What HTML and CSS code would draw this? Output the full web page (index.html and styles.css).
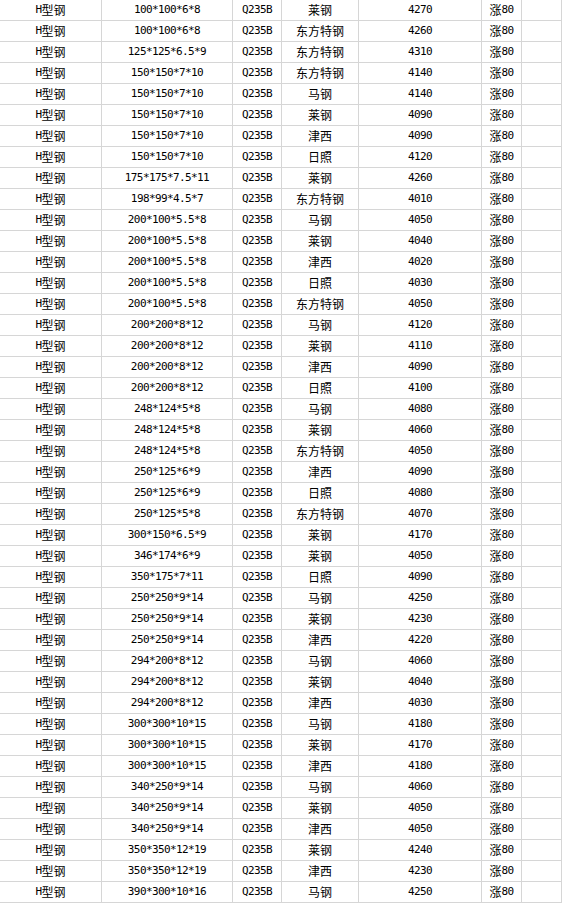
FILE: index.html
```html
<!DOCTYPE html>
<html lang="zh">
<head>
<meta charset="utf-8">
<title>H型钢价格</title>
<link rel="stylesheet" href="styles.css">
</head>
<body>
<div class="sheet">
<div class="c"><span class="a">H</span>型钢</div><div class="c n">100*100*6*8</div><div class="c n">Q235B</div><div class="c">莱钢</div><div class="c n">4270</div><div class="c">涨<span class="a">80</span></div><div class="c"></div>
<div class="c"><span class="a">H</span>型钢</div><div class="c n">100*100*6*8</div><div class="c n">Q235B</div><div class="c">东方特钢</div><div class="c n">4260</div><div class="c">涨<span class="a">80</span></div><div class="c"></div>
<div class="c"><span class="a">H</span>型钢</div><div class="c n">125*125*6.5*9</div><div class="c n">Q235B</div><div class="c">东方特钢</div><div class="c n">4310</div><div class="c">涨<span class="a">80</span></div><div class="c"></div>
<div class="c"><span class="a">H</span>型钢</div><div class="c n">150*150*7*10</div><div class="c n">Q235B</div><div class="c">东方特钢</div><div class="c n">4140</div><div class="c">涨<span class="a">80</span></div><div class="c"></div>
<div class="c"><span class="a">H</span>型钢</div><div class="c n">150*150*7*10</div><div class="c n">Q235B</div><div class="c">马钢</div><div class="c n">4140</div><div class="c">涨<span class="a">80</span></div><div class="c"></div>
<div class="c"><span class="a">H</span>型钢</div><div class="c n">150*150*7*10</div><div class="c n">Q235B</div><div class="c">莱钢</div><div class="c n">4090</div><div class="c">涨<span class="a">80</span></div><div class="c"></div>
<div class="c"><span class="a">H</span>型钢</div><div class="c n">150*150*7*10</div><div class="c n">Q235B</div><div class="c">津西</div><div class="c n">4090</div><div class="c">涨<span class="a">80</span></div><div class="c"></div>
<div class="c"><span class="a">H</span>型钢</div><div class="c n">150*150*7*10</div><div class="c n">Q235B</div><div class="c">日照</div><div class="c n">4120</div><div class="c">涨<span class="a">80</span></div><div class="c"></div>
<div class="c"><span class="a">H</span>型钢</div><div class="c n">175*175*7.5*11</div><div class="c n">Q235B</div><div class="c">莱钢</div><div class="c n">4260</div><div class="c">涨<span class="a">80</span></div><div class="c"></div>
<div class="c"><span class="a">H</span>型钢</div><div class="c n">198*99*4.5*7</div><div class="c n">Q235B</div><div class="c">东方特钢</div><div class="c n">4010</div><div class="c">涨<span class="a">80</span></div><div class="c"></div>
<div class="c"><span class="a">H</span>型钢</div><div class="c n">200*100*5.5*8</div><div class="c n">Q235B</div><div class="c">马钢</div><div class="c n">4050</div><div class="c">涨<span class="a">80</span></div><div class="c"></div>
<div class="c"><span class="a">H</span>型钢</div><div class="c n">200*100*5.5*8</div><div class="c n">Q235B</div><div class="c">莱钢</div><div class="c n">4040</div><div class="c">涨<span class="a">80</span></div><div class="c"></div>
<div class="c"><span class="a">H</span>型钢</div><div class="c n">200*100*5.5*8</div><div class="c n">Q235B</div><div class="c">津西</div><div class="c n">4020</div><div class="c">涨<span class="a">80</span></div><div class="c"></div>
<div class="c"><span class="a">H</span>型钢</div><div class="c n">200*100*5.5*8</div><div class="c n">Q235B</div><div class="c">日照</div><div class="c n">4030</div><div class="c">涨<span class="a">80</span></div><div class="c"></div>
<div class="c"><span class="a">H</span>型钢</div><div class="c n">200*100*5.5*8</div><div class="c n">Q235B</div><div class="c">东方特钢</div><div class="c n">4050</div><div class="c">涨<span class="a">80</span></div><div class="c"></div>
<div class="c"><span class="a">H</span>型钢</div><div class="c n">200*200*8*12</div><div class="c n">Q235B</div><div class="c">马钢</div><div class="c n">4120</div><div class="c">涨<span class="a">80</span></div><div class="c"></div>
<div class="c"><span class="a">H</span>型钢</div><div class="c n">200*200*8*12</div><div class="c n">Q235B</div><div class="c">莱钢</div><div class="c n">4110</div><div class="c">涨<span class="a">80</span></div><div class="c"></div>
<div class="c"><span class="a">H</span>型钢</div><div class="c n">200*200*8*12</div><div class="c n">Q235B</div><div class="c">津西</div><div class="c n">4090</div><div class="c">涨<span class="a">80</span></div><div class="c"></div>
<div class="c"><span class="a">H</span>型钢</div><div class="c n">200*200*8*12</div><div class="c n">Q235B</div><div class="c">日照</div><div class="c n">4100</div><div class="c">涨<span class="a">80</span></div><div class="c"></div>
<div class="c"><span class="a">H</span>型钢</div><div class="c n">248*124*5*8</div><div class="c n">Q235B</div><div class="c">马钢</div><div class="c n">4080</div><div class="c">涨<span class="a">80</span></div><div class="c"></div>
<div class="c"><span class="a">H</span>型钢</div><div class="c n">248*124*5*8</div><div class="c n">Q235B</div><div class="c">莱钢</div><div class="c n">4060</div><div class="c">涨<span class="a">80</span></div><div class="c"></div>
<div class="c"><span class="a">H</span>型钢</div><div class="c n">248*124*5*8</div><div class="c n">Q235B</div><div class="c">东方特钢</div><div class="c n">4050</div><div class="c">涨<span class="a">80</span></div><div class="c"></div>
<div class="c"><span class="a">H</span>型钢</div><div class="c n">250*125*6*9</div><div class="c n">Q235B</div><div class="c">津西</div><div class="c n">4090</div><div class="c">涨<span class="a">80</span></div><div class="c"></div>
<div class="c"><span class="a">H</span>型钢</div><div class="c n">250*125*6*9</div><div class="c n">Q235B</div><div class="c">日照</div><div class="c n">4080</div><div class="c">涨<span class="a">80</span></div><div class="c"></div>
<div class="c"><span class="a">H</span>型钢</div><div class="c n">250*125*5*8</div><div class="c n">Q235B</div><div class="c">东方特钢</div><div class="c n">4070</div><div class="c">涨<span class="a">80</span></div><div class="c"></div>
<div class="c"><span class="a">H</span>型钢</div><div class="c n">300*150*6.5*9</div><div class="c n">Q235B</div><div class="c">莱钢</div><div class="c n">4170</div><div class="c">涨<span class="a">80</span></div><div class="c"></div>
<div class="c"><span class="a">H</span>型钢</div><div class="c n">346*174*6*9</div><div class="c n">Q235B</div><div class="c">莱钢</div><div class="c n">4050</div><div class="c">涨<span class="a">80</span></div><div class="c"></div>
<div class="c"><span class="a">H</span>型钢</div><div class="c n">350*175*7*11</div><div class="c n">Q235B</div><div class="c">日照</div><div class="c n">4090</div><div class="c">涨<span class="a">80</span></div><div class="c"></div>
<div class="c"><span class="a">H</span>型钢</div><div class="c n">250*250*9*14</div><div class="c n">Q235B</div><div class="c">马钢</div><div class="c n">4250</div><div class="c">涨<span class="a">80</span></div><div class="c"></div>
<div class="c"><span class="a">H</span>型钢</div><div class="c n">250*250*9*14</div><div class="c n">Q235B</div><div class="c">莱钢</div><div class="c n">4230</div><div class="c">涨<span class="a">80</span></div><div class="c"></div>
<div class="c"><span class="a">H</span>型钢</div><div class="c n">250*250*9*14</div><div class="c n">Q235B</div><div class="c">津西</div><div class="c n">4220</div><div class="c">涨<span class="a">80</span></div><div class="c"></div>
<div class="c"><span class="a">H</span>型钢</div><div class="c n">294*200*8*12</div><div class="c n">Q235B</div><div class="c">马钢</div><div class="c n">4060</div><div class="c">涨<span class="a">80</span></div><div class="c"></div>
<div class="c"><span class="a">H</span>型钢</div><div class="c n">294*200*8*12</div><div class="c n">Q235B</div><div class="c">莱钢</div><div class="c n">4040</div><div class="c">涨<span class="a">80</span></div><div class="c"></div>
<div class="c"><span class="a">H</span>型钢</div><div class="c n">294*200*8*12</div><div class="c n">Q235B</div><div class="c">津西</div><div class="c n">4030</div><div class="c">涨<span class="a">80</span></div><div class="c"></div>
<div class="c"><span class="a">H</span>型钢</div><div class="c n">300*300*10*15</div><div class="c n">Q235B</div><div class="c">马钢</div><div class="c n">4180</div><div class="c">涨<span class="a">80</span></div><div class="c"></div>
<div class="c"><span class="a">H</span>型钢</div><div class="c n">300*300*10*15</div><div class="c n">Q235B</div><div class="c">莱钢</div><div class="c n">4170</div><div class="c">涨<span class="a">80</span></div><div class="c"></div>
<div class="c"><span class="a">H</span>型钢</div><div class="c n">300*300*10*15</div><div class="c n">Q235B</div><div class="c">津西</div><div class="c n">4180</div><div class="c">涨<span class="a">80</span></div><div class="c"></div>
<div class="c"><span class="a">H</span>型钢</div><div class="c n">340*250*9*14</div><div class="c n">Q235B</div><div class="c">马钢</div><div class="c n">4060</div><div class="c">涨<span class="a">80</span></div><div class="c"></div>
<div class="c"><span class="a">H</span>型钢</div><div class="c n">340*250*9*14</div><div class="c n">Q235B</div><div class="c">莱钢</div><div class="c n">4050</div><div class="c">涨<span class="a">80</span></div><div class="c"></div>
<div class="c"><span class="a">H</span>型钢</div><div class="c n">340*250*9*14</div><div class="c n">Q235B</div><div class="c">津西</div><div class="c n">4050</div><div class="c">涨<span class="a">80</span></div><div class="c"></div>
<div class="c"><span class="a">H</span>型钢</div><div class="c n">350*350*12*19</div><div class="c n">Q235B</div><div class="c">莱钢</div><div class="c n">4240</div><div class="c">涨<span class="a">80</span></div><div class="c"></div>
<div class="c"><span class="a">H</span>型钢</div><div class="c n">350*350*12*19</div><div class="c n">Q235B</div><div class="c">津西</div><div class="c n">4230</div><div class="c">涨<span class="a">80</span></div><div class="c"></div>
<div class="c"><span class="a">H</span>型钢</div><div class="c n">390*300*10*16</div><div class="c n">Q235B</div><div class="c">马钢</div><div class="c n">4250</div><div class="c">涨<span class="a">80</span></div><div class="c"></div>
</div>
</body>
</html>
```
FILE: styles.css
```css
html, body {
  margin: 0;
  padding: 0;
  background: #ffffff;
}
.sheet {
  display: grid;
  grid-template-columns: 102px 131px 49px 77px 123px 40px 40px;
  grid-auto-rows: 21px;
  width: 562px;
  font-family: "Noto Sans CJK SC", "DejaVu Sans", sans-serif;
  font-size: 12px;
  color: #000;
}
.c {
  box-sizing: border-box;
  border-right: 1px solid #d6d6d6;
  border-bottom: 1px solid #d6d6d6;
  display: flex;
  align-items: center;
  justify-content: center;
  white-space: nowrap;
  overflow: hidden;
  line-height: 20px;
}
.n,
.a {
  font-family: "DejaVu Sans Mono", "Liberation Mono", monospace;
  font-size: 11px;
  letter-spacing: -0.6px;
}
.a {
  letter-spacing: -0.6px;
}
```
